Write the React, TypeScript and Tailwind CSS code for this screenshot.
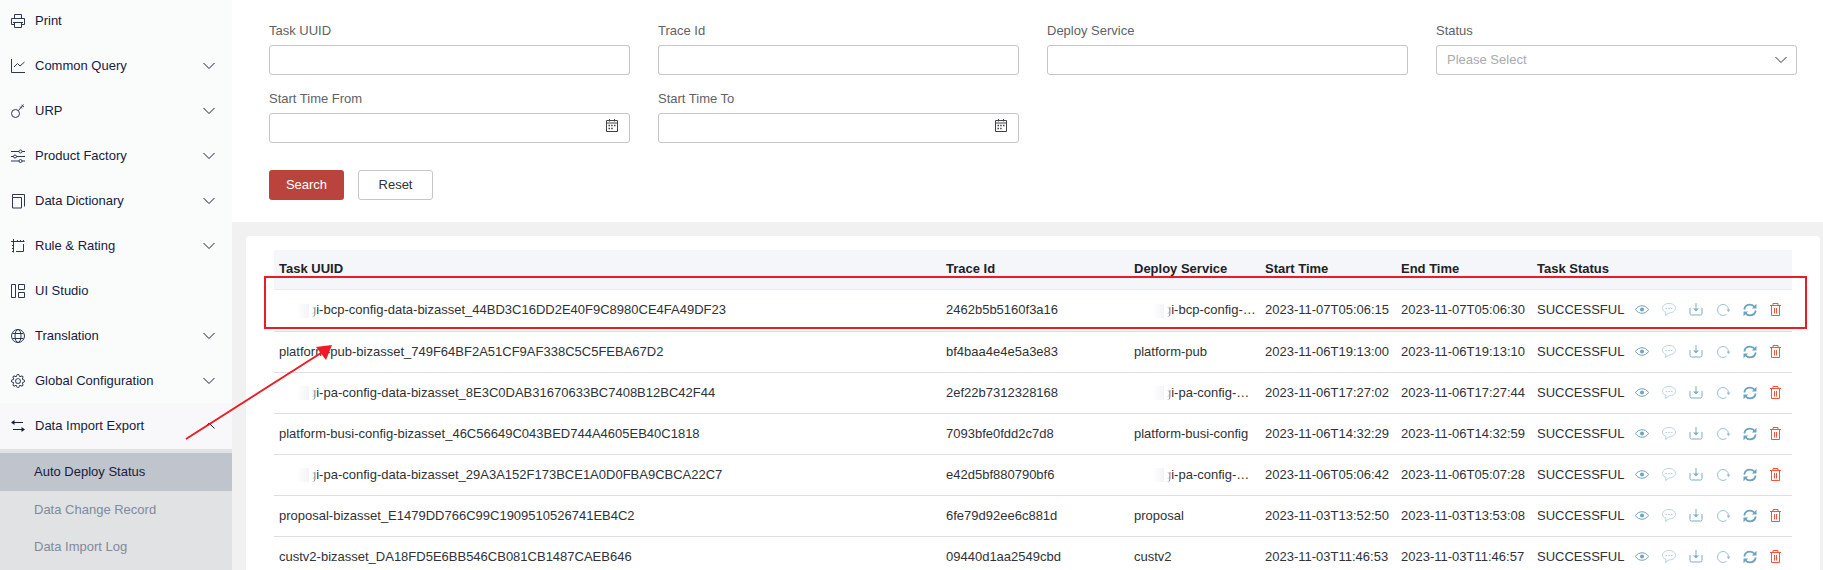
import { useState } from 'react';
import type { ReactNode } from 'react';
import { BsGear } from 'react-icons/bs';

interface MenuItem {
    label: string;
    icon: ReactNode;
    expandable?: boolean;
}

interface Task {
    uuid: string;
    traceId: string;
    service: string;
    start: string;
    end: string;
    status: string;
    masked?: boolean;
}

const Glyph = ({ children }: { children: ReactNode }) => (
    <svg viewBox="0 0 14 14" className="w-3.5 h-3.5 overflow-visible" fill="none" stroke="currentColor" strokeWidth="1" aria-hidden="true">
        {children}
    </svg>
);

const Chevron = ({ up = false }: { up?: boolean }) => (
    <svg viewBox="0 0 12 8" className="w-3 h-2" fill="none" stroke="currentColor" strokeWidth="1" aria-hidden="true">
        <path d={up ? 'M0.5 6.5L6 1L11.5 6.5' : 'M0.5 1L6 6.5L11.5 1'} />
    </svg>
);

const menu: MenuItem[] = [
    {
        label: 'Print',
        icon: <Glyph><path d="M3.5 4.5V.5h7v4M3 10.5H.5v-6h13v6H11M3.5 8.5h7v5h-7zM2 8.5h10" /></Glyph>,
    },
    {
        label: 'Common Query',
        icon: <Glyph><path d="M.5 0v13.5H14M3 8l3.5-3.5L9 7l4.5-4" /></Glyph>,
        expandable: true,
    },
    {
        label: 'URP',
        icon: <Glyph><circle cx="4.5" cy="9.5" r="4" /><path d="M7.5 6.500L12.500 .5M9 2.500l2 2M10.500 1l2.500 2" /></Glyph>,
        expandable: true,
    },
    {
        label: 'Product Factory',
        icon: <Glyph><path d="M0 2.5h8M11 2.5h3M0 7.5h2.5M5.5 7.5H14M0 12h8M11 12h3" /><circle cx="9.5" cy="2.5" r="1.5" /><circle cx="4" cy="7.5" r="1.5" /><circle cx="9.5" cy="12" r="1.5" /></Glyph>,
        expandable: true,
    },
    {
        label: 'Data Dictionary',
        icon: <Glyph><path d="M1.500 3.500h9v10.500h-9zM1.500 3.500V.5h12V12.500" /></Glyph>,
        expandable: true,
    },
    {
        label: 'Rule & Rating',
        icon: <Glyph><path d="M2.5 0v13.5M0 2.5h13.5M6.5 1v1.5M9.5 1v1.5M12.5 1v1.5M1 6.5h1.5M1 9.5h1.5M1 12.5h1.5M12.5 5v7.5M5 12.5h7.5" /></Glyph>,
        expandable: true,
    },
    {
        label: 'UI Studio',
        icon: <Glyph><path d="M.5.5h4v13h-4zM7.5.5h6v5h-6zM7.5 8.5h6v5h-6z" /></Glyph>,
    },
    {
        label: 'Translation',
        icon: <Glyph><circle cx="7" cy="7" r="6.5" /><ellipse cx="7" cy="7" rx="3" ry="6.5" /><path d="M1.5 4.5h11M1.5 9.5h11" /></Glyph>,
        expandable: true,
    },
    { label: 'Global Configuration', icon: <BsGear className="w-3.5 h-3.5" />, expandable: true },
];

const subMenu = ['Auto Deploy Status', 'Data Change Record', 'Data Import Log'];

const tasks: Task[] = [
    { uuid: 'i-bcp-config-data-bizasset_44BD3C16DD2E40F9C8980CE4FA49DF23', traceId: '2462b5b5160f3a16', service: 'i-bcp-config-…', start: '2023-11-07T05:06:15', end: '2023-11-07T05:06:30', status: 'SUCCESSFUL', masked: true },
    { uuid: 'platform-pub-bizasset_749F64BF2A51CF9AF338C5C5FEBA67D2', traceId: 'bf4baa4e4e5a3e83', service: 'platform-pub', start: '2023-11-06T19:13:00', end: '2023-11-06T19:13:10', status: 'SUCCESSFUL' },
    { uuid: 'i-pa-config-data-bizasset_8E3C0DAB31670633BC7408B12BC42F44', traceId: '2ef22b7312328168', service: 'i-pa-config-…', start: '2023-11-06T17:27:02', end: '2023-11-06T17:27:44', status: 'SUCCESSFUL', masked: true },
    { uuid: 'platform-busi-config-bizasset_46C56649C043BED744A4605EB40C1818', traceId: '7093bfe0fdd2c7d8', service: 'platform-busi-config', start: '2023-11-06T14:32:29', end: '2023-11-06T14:32:59', status: 'SUCCESSFUL' },
    { uuid: 'i-pa-config-data-bizasset_29A3A152F173BCE1A0D0FBA9CBCA22C7', traceId: 'e42d5bf880790bf6', service: 'i-pa-config-…', start: '2023-11-06T05:06:42', end: '2023-11-06T05:07:28', status: 'SUCCESSFUL', masked: true },
    { uuid: 'proposal-bizasset_E1479DD766C99C1909510526741EB4C2', traceId: '6fe79d92ee6c881d', service: 'proposal', start: '2023-11-03T13:52:50', end: '2023-11-03T13:53:08', status: 'SUCCESSFUL' },
    { uuid: 'custv2-bizasset_DA18FD5E6BB546CB081CB1487CAEB646', traceId: '09440d1aa2549cbd', service: 'custv2', start: '2023-11-03T11:46:53', end: '2023-11-03T11:46:57', status: 'SUCCESSFUL' },
];

const actions: { name: string; color: string; icon: ReactNode }[] = [
    {
        name: 'View',
        color: 'text-[#6fa3bd]',
        icon: <Glyph><path d="M.5 6.500C3.500 1.500 10.500 1.500 13.500 6.500C10.500 11.500 3.500 11.500 .5 6.500z" /><circle cx="7" cy="6.500" r="2" fill="currentColor" stroke="none" /></Glyph>,
    },
    {
        name: 'Message',
        color: 'text-[#b7d3e0]',
        icon: <Glyph><path d="M7 .5C3.300 .5 .5 2.500 .5 5.200c0 2 1.400 3.500 3.500 4.200l-.5 3.100 3.500-2.600c3.700 0 6.500-2 6.500-4.700S10.700 .5 7 .5z" /><path d="M3.500 5.500h1.500M6.200 5.500h1.600M9 5.500h1.500" /></Glyph>,
    },
    {
        name: 'Download',
        color: 'text-[#7fadc3]',
        icon: <Glyph><path d="M7 0v7M1 5v5.500a1.500 1.500 0 0 0 1.500 1.500h9a1.500 1.500 0 0 0 1.500-1.500V5" /><path d="M4 5.500h6L7 8.500z" fill="currentColor" stroke="none" /></Glyph>,
    },
    {
        name: 'Redo',
        color: 'text-[#9dc0d1]',
        icon: <Glyph><path d="M12.500 7A5.500 5.500 0 1 0 10.500 11.200" /><path d="M10.500 6.500h4l-2 2.700z" fill="currentColor" stroke="none" /></Glyph>,
    },
    {
        name: 'Refresh',
        color: 'text-[#6fa3bd]',
        icon: <Glyph><path strokeWidth="1.800" d="M1.300 6.500C1.800 3.500 4.200 1.700 7 1.700c2 0 3.600.8 4.600 2.300M12.700 7.500c-.5 3-2.900 4.800-5.700 4.800-2 0-3.600-.8-4.600-2.300" /><path d="M13.500.8v4.700H8.800zM.5 13.200V8.500h4.700z" fill="currentColor" stroke="none" /></Glyph>,
    },
    {
        name: 'Delete',
        color: 'text-[#f5533d]',
        icon: <Glyph><path d="M0 2.500h11M3 2.500V.5h5v2M1.500 3v9.500h8V3M4.500 5v5.500M6.500 5v5.500" /></Glyph>,
    },
];

const Field = ({ id, label, calendar }: { id: string; label: string; calendar?: boolean }) => (
    <div>
        <label htmlFor={id} className="block h-6 pt-0.5 leading-4 text-[#606266]">{label}</label>
        <div className="relative">
            <input id={id} type="text" className="block w-full h-[30px] px-2.5 rounded-[3px] border border-[#c6c6c6] bg-white outline-none focus:border-[#ba443d]" />
            {calendar && (
                <button type="button" aria-label={`Pick ${label}`} className="absolute right-3 top-1.5 text-[#404246]">
                    <svg viewBox="0 0 12 13" className="w-3 h-[13px]" fill="none" stroke="currentColor" aria-hidden="true">
                        <path d="M.5 1.500h11v11H.5zM.5 4h11M3.500 0v2.500M8.500 0v2.500" />
                        <path d="M2.500 6.500h1.500M5.200 6.500h1.500M8 6.500h1.500M2.500 9.500h1.500M5.200 9.500h1.500" strokeWidth="1.500" />
                    </svg>
                </button>
            )}
        </div>
    </div>
);

const Masked = () => (
    <>
        <span className="inline-block w-[18px]" />
        <span className="inline-block align-middle w-3 h-3.5 bg-linear-to-r from-white to-[#f3f4f7]" />
        <span className="bg-linear-to-r from-transparent from-40% to-[#606266] bg-clip-text text-transparent">g</span>
    </>
);

export default function App() {
    const [active, setActive] = useState('Auto Deploy Status');

    return (
        <div className="relative flex h-screen overflow-hidden bg-[#f1f1f1] font-['Liberation_Sans',Arial,sans-serif] text-[13px] leading-4">
            <aside className="w-58 shrink-0 flex flex-col bg-[#fafcfb] text-[#16213d]">
                <nav className="-mt-0.5 flex-1 flex flex-col">
                    {menu.map(item => (
                        <button key={item.label} type="button" className="flex items-center h-[45px] shrink-0 pl-[11px] pr-[17px] text-left">
                            <span className="w-6 text-[#2c3852]">{item.icon}</span>
                            <span className="flex-1">{item.label}</span>
                            {item.expandable && <Chevron />}
                        </button>
                    ))}
                    <button type="button" aria-expanded="true" className="flex items-center h-[46px] shrink-0 pl-[11px] pr-[17px] text-left bg-[#f8f8fb]">
                        <span className="w-6">
                            <Glyph><path d="M1 3.500h11M2 10.500h11" /><path d="M0 3.500L3.500 1v5zM14 10.500l-3.500-2.500v5z" fill="currentColor" stroke="none" /></Glyph>
                        </span>
                        <span className="flex-1">Data Import Export</span>
                        <Chevron up />
                    </button>
                    <div className="flex-1 pt-1 bg-[#e0e2e3]">
                        {subMenu.map(label => (
                            <a
                                key={label}
                                href="#"
                                onClick={() => setActive(label)}
                                className={`flex items-center pl-[34px] ${active === label ? 'h-[38px] bg-[#c0c4cc]' : 'h-[37px] text-[#828a9b]'}`}
                            >
                                {label}
                            </a>
                        ))}
                    </div>
                </nav>
            </aside>

            <main className="flex-1 min-w-0">
                {/* Search form */}
                <form className="bg-white pl-[37px] pr-[26px] pt-[21px] pb-[22px]" onSubmit={e => e.preventDefault()}>
                    <div className="grid grid-cols-4 gap-x-7 gap-y-3.5">
                        <Field id="uuid" label="Task UUID" />
                        <Field id="trace" label="Trace Id" />
                        <Field id="service" label="Deploy Service" />
                        <div>
                            <label htmlFor="status" className="block h-6 pt-0.5 leading-4 text-[#606266]">Status</label>
                            <div className="relative">
                                <select id="status" className="block w-full h-[30px] px-2.5 rounded-[3px] border border-[#c6c6c6] bg-white appearance-none text-[#a8abb0]">
                                    <option>Please Select</option>
                                </select>
                                <span className="absolute right-2.5 top-[11px] pointer-events-none text-[#303236]"><Chevron /></span>
                            </div>
                        </div>
                        <Field id="from" label="Start Time From" calendar />
                        <Field id="to" label="Start Time To" calendar />
                    </div>
                    <div className="flex gap-3.5 mt-[27px]">
                        <button type="submit" className="w-[75px] h-[30px] rounded-[3px] bg-[#ba443d] text-white">Search</button>
                        <button type="reset" className="w-[75px] h-[30px] rounded-[3px] border border-[#c6c6c6] bg-white text-[#303236]">Reset</button>
                    </div>
                </form>

                {/* Task list */}
                <section className="relative mt-3.5 ml-3.5 mr-[3px] px-7 pt-3.5 rounded bg-white">
                    <table className="w-full table-fixed text-left text-[#303236]">
                        <colgroup>
                            <col />
                            <col className="w-[188px]" />
                            <col className="w-[131px]" />
                            <col className="w-[136px]" />
                            <col className="w-[136px]" />
                            <col className="w-[98px]" />
                            <col className="w-[162px]" />
                        </colgroup>
                        <thead className="bg-[#f5f6fa]">
                            <tr className="h-[39px] border-b border-[#ebedf0] text-[#202226]">
                                {['Task UUID', 'Trace Id', 'Deploy Service', 'Start Time', 'End Time', 'Task Status', ''].map(title => (
                                    <th key={title} className="pl-[5px] font-bold">{title}</th>
                                ))}
                            </tr>
                        </thead>
                        <tbody>
                            {tasks.map(task => (
                                <tr key={task.traceId} className="h-[41px] first:h-[42px] border-b border-[#dcdee3] whitespace-nowrap">
                                    <td className="pl-[5px]">{task.masked && <Masked />}{task.uuid}</td>
                                    <td className="pl-[5px]">{task.traceId}</td>
                                    <td className="pl-[5px]">{task.masked && <Masked />}{task.service}</td>
                                    <td className="pl-[5px]">{task.start}</td>
                                    <td className="pl-[5px]">{task.end}</td>
                                    <td className="pl-[5px]">{task.status}</td>
                                    <td className="pl-[5px]">
                                        <div className="flex gap-[13px]">
                                            {actions.map(action => (
                                                <button key={action.name} type="button" aria-label={action.name} className={action.color}>
                                                    {action.icon}
                                                </button>
                                            ))}
                                        </div>
                                    </td>
                                </tr>
                            ))}
                        </tbody>
                    </table>

                    {/* Highlight on the first task */}
                    <div className="absolute left-[18px] right-[13px] top-10 h-[53px] border-2 border-[#ed1c24] pointer-events-none" />
                </section>
            </main>

            <svg viewBox="0 0 148 96" className="absolute left-[185px] top-[344px] w-[148px] h-24 pointer-events-none" aria-hidden="true">
                <path d="M1 95L136 9" stroke="#ed1c24" strokeWidth="2" />
                <path d="M147 1L131 3L141 16z" fill="#ed1c24" />
            </svg>
        </div>
    );
}
